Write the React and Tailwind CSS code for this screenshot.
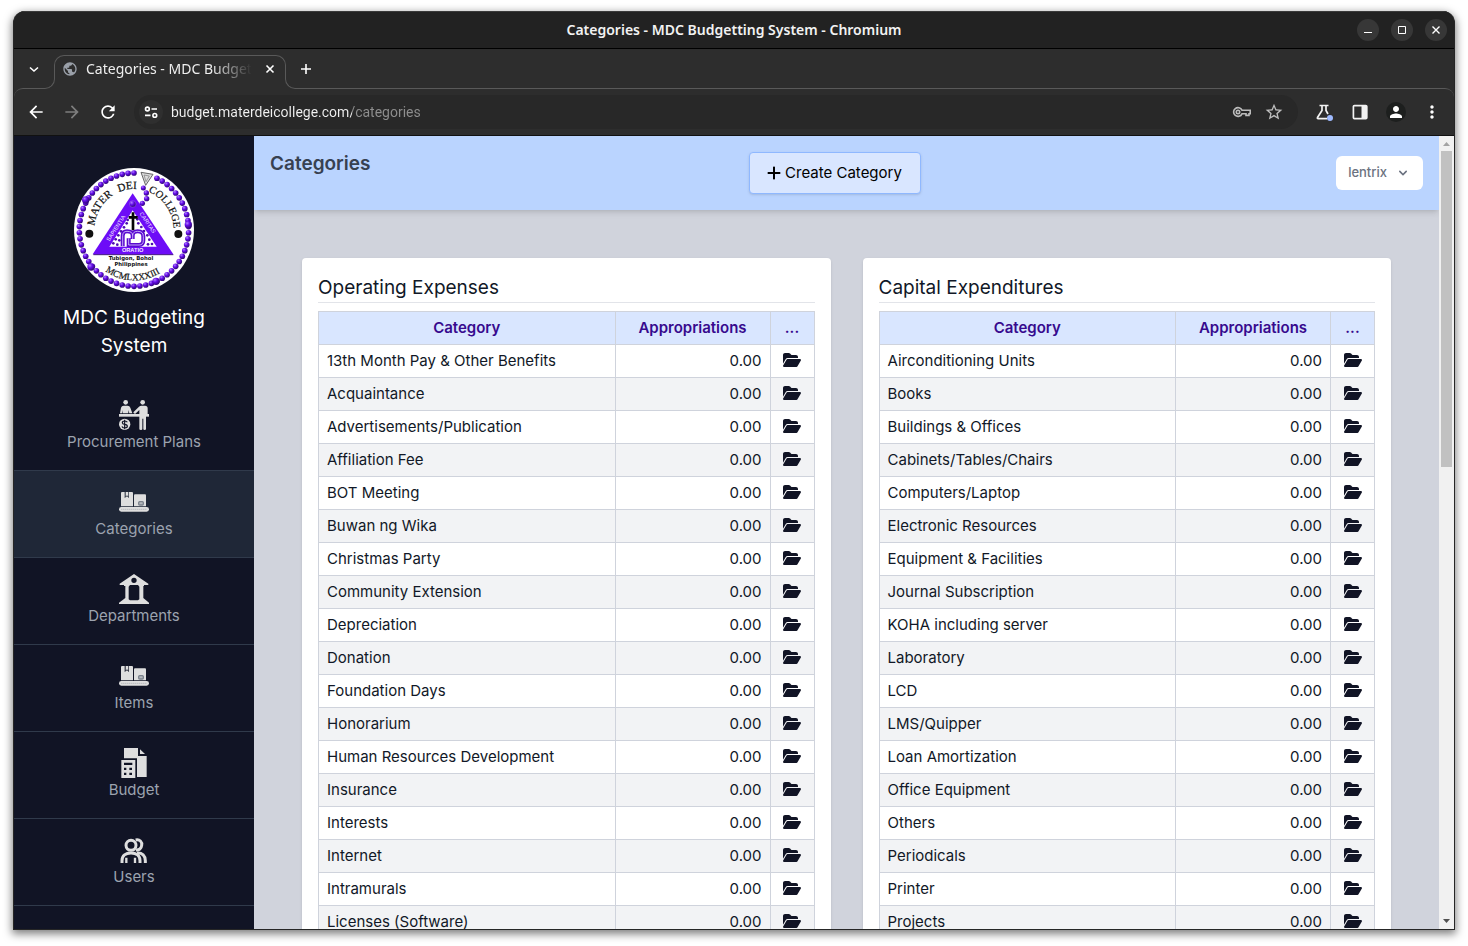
import React from "react";
import { FaFolderOpen, FaPlus } from "react-icons/fa6";
import {
  MdArrowBack,
  MdArrowForward,
  MdRefresh,
  MdStarOutline,
  MdOutlineVpnKey,
  MdPerson,
  MdMoreVert,
  MdPublic,
} from "react-icons/md";

const operating = [
  "13th Month Pay & Other Benefits",
  "Acquaintance",
  "Advertisements/Publication",
  "Affiliation Fee",
  "BOT Meeting",
  "Buwan ng Wika",
  "Christmas Party",
  "Community Extension",
  "Depreciation",
  "Donation",
  "Foundation Days",
  "Honorarium",
  "Human Resources Development",
  "Insurance",
  "Interests",
  "Internet",
  "Intramurals",
  "Licenses (Software)",
];

const capital = [
  "Airconditioning Units",
  "Books",
  "Buildings & Offices",
  "Cabinets/Tables/Chairs",
  "Computers/Laptop",
  "Electronic Resources",
  "Equipment & Facilities",
  "Journal Subscription",
  "KOHA including server",
  "Laboratory",
  "LCD",
  "LMS/Quipper",
  "Loan Amortization",
  "Office Equipment",
  "Others",
  "Periodicals",
  "Printer",
  "Projects",
];

/* ---------- Sidebar icons ---------- */

function ProcurementIcon() {
  return (
    <svg viewBox="0 0 90 90" className="size-[30px]" fill="#dedede" aria-hidden="true">
      <circle cx="20" cy="7" r="7" />
      <path d="M3 40 L6 23 Q8 17 14 17 H26 Q32 17 34 23 L40 40 H31 L28 30 V40 H12 V30 L10 40 Z" />
      <rect x="0" y="42" width="90" height="8" />
      <circle cx="71" cy="7" r="7" />
      <path d="M43 37 L60 20 Q63 17 67 17 H78 Q86 17 86 25 V45 H61 V30 L49 41 Q44 42 43 37 Z" />
      <path d="M61 48 H81 V87 Q81 90 77 90 Q73 90 73 87 V56 H70 V87 Q70 90 66 90 Q61 90 61 87 Z" />
      <circle cx="17" cy="73" r="17" />
      <path
        d="M25 67 Q23 63 17 63 Q10 63 10 68 Q10 72 17 73 Q25 74 25 79 Q25 84 17 84 Q10 84 9 79 M17 59 V88"
        fill="none"
        stroke="#111425"
        strokeWidth="3.5"
      />
    </svg>
  );
}

function BoxesIcon() {
  return (
    <svg viewBox="0 0 90 90" className="size-[30px]" fill="#dedede" aria-hidden="true">
      <path d="M9 15 H17 V33 L24 28 L30 33 V15 H39 Q42 15 42 18 V58 H6 V18 Q6 15 9 15 Z" />
      <path d="M20 15 H28 V29 L24 25 L20 29 Z" />
      <path d="M48 22 H78 Q81 22 81 25 V58 H45 V25 Q45 22 48 22 Z" />
      <rect x="59" y="44" width="14" height="10" rx="3" fill="#b5b8bd" stroke="#7b828c" strokeWidth="4" />
      <rect x="0" y="60" width="90" height="14" rx="7" />
      <path d="M7 67 H84" stroke="#8b9098" strokeWidth="2" strokeDasharray="3 3" />
    </svg>
  );
}

function BuildingIcon() {
  return (
    <svg viewBox="0 0 90 90" className="size-[30px]" aria-hidden="true">
      <path
        fill="#dedede"
        fillRule="evenodd"
        d="M45 0 L88 29 V33 H75 V36 H73 V72 L90 86 V90 H0 V86 L15 75 L19 72 V36 H15 V33 H2 V29 Z M33 33 L29 38 V76 L33 79 H57 L61 76 V38 L57 33 Z M45 11 A8 8 0 1 0 45 27 A8 8 0 1 0 45 11 Z"
      />
    </svg>
  );
}

function BudgetIcon() {
  return (
    <svg viewBox="0 0 90 90" className="size-[30px]" fill="#dedede" aria-hidden="true">
      <path d="M15 0 H57 V24 H83 V87 H54 V31 H15 Z" />
      <path d="M63 4 L78 18 H63 Z" />
      <path
        fillRule="evenodd"
        d="M7 36 H49 V90 H7 Z M15 44 V51 H40 V44 Z M15 59 V66 H22 V59 Z M31 59 V66 H39 V59 Z M15 74 V81 H22 V74 Z M31 74 V81 H39 V74 Z"
      />
    </svg>
  );
}

function UsersIcon() {
  return (
    <svg viewBox="0 0 90 90" className="size-[30px]" fill="none" stroke="#dedede" strokeWidth="9" aria-hidden="true">
      <circle cx="36" cy="31" r="15" />
      <path d="M50 15 C62 12 70 21 68 31 C67 41 60 46 51 45" />
      <path d="M9 84 V77 C9 62 20 54 36 54 C52 54 63 62 63 77 V84" />
      <path d="M54 54 C70 53 79 62 79 77 V84" />
      <path d="M22 68 V84 M48 68 V84" strokeWidth="7" />
    </svg>
  );
}

const navItems = [
  { label: "Procurement Plans", Icon: ProcurementIcon },
  { label: "Categories", Icon: BoxesIcon, active: true },
  { label: "Departments", Icon: BuildingIcon },
  { label: "Items", Icon: BoxesIcon },
  { label: "Budget", Icon: BudgetIcon },
  { label: "Users", Icon: UsersIcon },
];

/* ---------- School seal ---------- */

const COUNT = 58;
const ringBeads = Array.from({ length: COUNT }, (_, i) => {
  const a = (i / COUNT) * Math.PI * 2 - Math.PI / 2;
  return { x: 222 + 164 * Math.cos(a), y: 224 + 170 * Math.sin(a), r: 8.5 };
}).filter((b) => !(b.y < 75 && b.x > 236 && b.x < 282));

const extraBeads = [
  { x: 77, y: 135, r: 11 },
  { x: 385, y: 209, r: 11 },
  { x: 93, y: 336, r: 11 },
  { x: 288, y: 379, r: 11 },
  { x: 250, y: 99, r: 7.5 },
  { x: 259, y: 114, r: 8 },
  { x: 260, y: 131, r: 8 },
  { x: 247, y: 145, r: 8 },
];

const dots = [
  [200, 205], [235, 205], [192, 217], [244, 216], [203, 195], [232, 193],
  [183, 229], [252, 228], [175, 241], [262, 241], [167, 253], [178, 256],
  [268, 254], [160, 265], [172, 269], [276, 267], [264, 268],
];

const monogram =
  "M188 274 V242 Q188 229 201 229 Q218 229 218 242 V252 M218 242 Q218 229 233 229 Q250 229 250 244 V256 Q250 270 237 270 H206 V250";

function Seal() {
  return (
    <svg viewBox="42 39 360 372" className="h-[124px] w-[120px]" role="img" aria-label="Mater Dei College">
      <defs>
        <radialGradient id="bead" cx="0.35" cy="0.3" r="0.8">
          <stop offset="0" stopColor="#b07dff" />
          <stop offset="0.4" stopColor="#640ce8" />
          <stop offset="1" stopColor="#25045f" />
        </radialGradient>
        <path id="arc-top" d="M103 225 A119 123 0 0 1 341 225" />
        <path id="arc-bottom" d="M72 225 A150 151 0 0 0 372 225" />
        <path id="edge-left" d="M148 260 L207 170" />
        <path id="edge-right" d="M238 176 L298 266" />
      </defs>
      <ellipse cx="222" cy="225" rx="180" ry="186" fill="#fff" />
      {ringBeads.concat(extraBeads).map((b, i) => (
        <circle key={i} cx={b.x} cy={b.y} r={b.r} fill="url(#bead)" />
      ))}
      <path d="M243 52 L279 58 L257 91 Z" fill="#ddd" stroke="#666" strokeWidth="3" />
      <path d="M252 60 L268 63 L258 80 Z" fill="none" stroke="#777" strokeWidth="2" />
      <g fill="#111" stroke="#111" strokeWidth="0.6" fontFamily="'Liberation Serif', serif" fontSize="33">
        <text>
          <textPath href="#arc-top" startOffset="12">MATER</textPath>
        </text>
        <text>
          <textPath href="#arc-top" startOffset="143">DEI</textPath>
        </text>
        <text fontSize="31">
          <textPath href="#arc-top" startOffset="234">COLLEGE</textPath>
        </text>
        <text fontSize="28" textAnchor="middle">
          <textPath href="#arc-bottom" startOffset="49%">MCMLXXXIII</textPath>
        </text>
      </g>
      <circle cx="88" cy="236" r="12" fill="#111" />
      <circle cx="355" cy="237" r="12" fill="#111" />
      <path d="M218 115 L340 298 H98 Z" fill="#6d0cf7" />
      <path d="M100 299 H340" stroke="#3a067f" strokeWidth="3" />
      <path d="M218 166 L290 275 H148 Z" fill="#fff" />
      <circle cx="218" cy="147" r="10" fill="url(#bead)" stroke="#b98bff" strokeWidth="1" />
      {dots.map(([x, y]) => (
        <circle key={`${x}-${y}`} cx={x} cy={y} r="4" fill="#4c0bb0" />
      ))}
      <path d="M219 172 V226 M206 187 H233" stroke="#050505" strokeWidth="8" />
      <path d={monogram} fill="none" stroke="#5a0ad0" strokeWidth="12" />
      <path d={monogram} fill="none" stroke="#d9c4ff" strokeWidth="2.5" />
      <g fill="#f3eaff" fontFamily="'Liberation Sans', sans-serif" fontSize="17">
        <text>
          <textPath href="#edge-left">SAPIENTIA</textPath>
        </text>
        <text>
          <textPath href="#edge-right">CARITAS</textPath>
        </text>
        <text x="218" y="292" fontSize="17" fontWeight="700" textAnchor="middle">ORATIO</text>
      </g>
      <g fill="#111" fontFamily="'DejaVu Sans', sans-serif" fontSize="16" fontWeight="700" textAnchor="middle">
        <text x="213" y="315">Tubigon, Bohol</text>
        <text x="213" y="333">Philippines</text>
      </g>
    </svg>
  );
}

/* ---------- Browser chrome ---------- */

function TitleBar() {
  const btn = "flex size-[22px] items-center justify-center rounded-full bg-[#373737]";
  return (
    <div className="grid h-[38px] shrink-0 grid-cols-[1fr_auto_1fr] items-center border-t border-b border-t-[#3a3a3a] border-b-black bg-[#222222] px-[7px]">
      <span />
      <span className="font-['Noto_Sans',sans-serif] text-sm font-semibold text-[#f2f2f2]">
        Categories - MDC Budgetting System - Chromium
      </span>
      <div className="flex justify-end gap-3 text-white">
        <button type="button" aria-label="Minimize" className={btn}>
          <svg viewBox="0 0 22 22" className="size-[22px]" stroke="currentColor"><path d="M7 13.5 H15" /></svg>
        </button>
        <button type="button" aria-label="Maximize" className={btn}>
          <svg viewBox="0 0 22 22" className="size-[22px]" stroke="currentColor" fill="none"><path d="M7.5 7.5 H14.5 V14.5 H7.5 Z" /></svg>
        </button>
        <button type="button" aria-label="Close" className={btn}>
          <svg viewBox="0 0 22 22" className="size-[22px]" stroke="currentColor" strokeWidth="1.4"><path d="M7.5 7.5 L14.5 14.5 M14.5 7.5 L7.5 14.5" /></svg>
        </button>
      </div>
    </div>
  );
}

function TabStrip() {
  return (
    <div className="flex h-[39px] shrink-0 items-end">
      <button type="button" aria-label="Search tabs" className="flex h-[39px] w-[30px] items-center justify-end pr-1 text-white">
        <svg viewBox="0 0 12 12" className="size-3" fill="none" stroke="currentColor" strokeWidth="1.6"><path d="M2 4.5 L6 8 L10 4.5" /></svg>
      </button>
      <div className="relative z-10 -mb-px flex h-[34px] items-end bg-[#2d2d2d]">
        <span className="-mr-px size-[11px] rounded-br-[10px] border-r border-b border-[#595959]" />
        <div className="h-6 w-[232px] self-start rounded-t-[10px] border-x border-t border-[#595959] pr-[7px] pl-[7px]">
          <div className="flex h-[26px] items-center">
            <MdPublic className="mr-2 size-4 shrink-0 text-[#9aa0a9]" />
            <span className="w-[166px] overflow-hidden whitespace-nowrap font-['Noto_Sans',sans-serif] text-sm text-[#eeeeee] [mask-image:linear-gradient(to_right,black_75%,transparent)]">
              Categories - MDC Budgetting System
            </span>
            <button type="button" aria-label="Close tab" className="ml-auto flex w-4 justify-center text-white">
              <svg viewBox="0 0 12 12" className="size-3" stroke="currentColor" strokeWidth="1.6"><path d="M2.5 2.5 L9.5 9.5 M9.5 2.5 L2.5 9.5" /></svg>
            </button>
          </div>
        </div>
        <span className="-ml-px size-[11px] rounded-bl-[10px] border-b border-l border-[#595959]" />
      </div>
      <button type="button" aria-label="New tab" className="flex h-[39px] w-5 items-center justify-center text-white">
        <svg viewBox="0 0 12 12" className="size-3" stroke="currentColor" strokeWidth="1.6"><path d="M6 1 V11 M1 6 H11" /></svg>
      </button>
    </div>
  );
}

function Toolbar() {
  return (
    <div className="flex h-[48px] shrink-0 items-center rounded-t-[9px] border-t border-b border-t-[#595959] border-b-[#111111] px-3 text-white">
      <div className="mr-4 flex items-center gap-4">
        <button type="button" aria-label="Back"><MdArrowBack className="size-5" /></button>
        <button type="button" aria-label="Forward" className="text-[#7d7d7d]"><MdArrowForward className="size-5" /></button>
        <button type="button" aria-label="Reload"><MdRefresh className="size-5" /></button>
      </div>
      <div className="mr-4 flex h-[34px] flex-1 items-center rounded-full bg-[#282828] pr-[14px] pl-[5px]">
        <button type="button" aria-label="Site information" className="flex size-6 items-center justify-center rounded-full bg-[#2f2f2f]">
          <svg viewBox="0 0 14 14" className="size-[14px]" fill="none" stroke="currentColor" strokeWidth="1.6">
            <circle cx="3.4" cy="4" r="1.9" />
            <path d="M7.5 4 H13 M1 10.4 H6.5" />
            <circle cx="10.8" cy="10.4" r="1.9" />
          </svg>
        </button>
        <input
          aria-label="Address"
          type="text"
          defaultValue="budget.materdeicollege.com/categories"
          className="ml-2 min-w-0 flex-1 bg-[linear-gradient(to_right,#f2f2f2_181px,#8f8f8f_181px)] bg-clip-text font-[Roboto,sans-serif] text-sm text-transparent outline-none"
        />
        <button type="button" aria-label="Passwords" className="mr-3 text-[#bdbdbd]">
          <svg viewBox="0 0 20 20" className="size-5" fill="none" stroke="currentColor" strokeWidth="1.6">
            <path d="M10 8.2 H18.2 V11.8 H17 V13.4 H14 V11.8 H10 A4.4 4.4 0 1 1 10 8.2 Z" />
            <circle cx="6" cy="10" r="1.7" />
          </svg>
        </button>
        <button type="button" aria-label="Bookmark" className="text-[#bdbdbd]"><MdStarOutline className="size-5" /></button>
      </div>
      <div className="flex items-center gap-4">
        <button type="button" aria-label="Experiments">
          <svg viewBox="0 0 20 20" className="size-5" fill="none" stroke="#f2f2f2" strokeWidth="1.7">
            <path d="M5.5 3.5 H14.5 M8 3.5 V8.5 L3.5 15.5 Q3 16.7 4.2 16.7 H13 M12 3.5 V8.5 L14 12" />
            <circle cx="16" cy="16" r="3" fill="#9fbaff" stroke="none" />
          </svg>
        </button>
        <button type="button" aria-label="Side panel">
          <svg viewBox="0 0 20 20" className="size-5" fill="none" stroke="#f2f2f2" strokeWidth="1.7">
            <rect x="3.4" y="3.6" width="13.4" height="13" rx="1" />
            <rect x="11.5" y="4" width="5" height="12.4" fill="#f2f2f2" stroke="none" />
          </svg>
        </button>
        <button type="button" aria-label="Profile" className="flex size-5 items-center justify-center rounded-full bg-[#1d1f1e]">
          <MdPerson className="size-[18px]" />
        </button>
        <button type="button" aria-label="Menu"><MdMoreVert className="size-5" /></button>
      </div>
    </div>
  );
}

function Scrollbar() {
  return (
    <div className="flex w-[15px] shrink-0 flex-col items-center bg-[#f1f1f1]" aria-hidden="true">
      <svg viewBox="0 0 15 15" className="size-[15px]"><path d="M4 10 L7.5 6 L11 10 Z" fill="#a3a3a3" /></svg>
      <div className="min-h-0 w-[11px] flex-1">
        <div className="h-[316px] bg-[#c1c1c1]" />
      </div>
      <svg viewBox="0 0 15 15" className="size-[15px]"><path d="M4 5 L7.5 9 L11 5 Z" fill="#505050" /></svg>
    </div>
  );
}

/* ---------- Page ---------- */

function Sidebar() {
  return (
    <aside className="w-60 shrink-0 overflow-hidden bg-[#111425] pt-8">
      <div className="flex flex-col items-center px-8 pb-6 text-center">
        <Seal />
        <p className="mt-3 text-[19px] leading-7 text-white">
          MDC Budgeting
          <br />
          System
        </p>
      </div>
      <nav>
        {navItems.map(({ label, Icon, active }) => (
          <a
            key={label}
            href="#"
            className={`flex flex-col items-center border-b border-[#303a4b] py-4 text-[15px] leading-6 text-[#9ca3af] ${
              active ? "bg-[#1f2737]" : ""
            }`}
          >
            <Icon />
            {label}
          </a>
        ))}
      </nav>
    </aside>
  );
}

function CategoryCard({ title, rows }) {
  return (
    <section className="rounded bg-white p-4 shadow-sm">
      <h2 className="mb-2 border-b border-[#e2e4e9] text-[19px] leading-7 text-[#111827]">{title}</h2>
      <table className="w-full table-fixed border-collapse text-[15px] leading-6 text-[#111827]">
        <colgroup>
          <col />
          <col className="w-[155px]" />
          <col className="w-11" />
        </colgroup>
        <thead>
          <tr className="bg-[#d9e6ff] text-[#370a8e]">
            <th className="border border-[#cfd3dc] px-2 py-1 font-semibold">Category</th>
            <th className="border border-[#cfd3dc] px-2 py-1 font-semibold">Appropriations</th>
            <th className="border border-[#cfd3dc] px-2 py-1 font-semibold">...</th>
          </tr>
        </thead>
        <tbody>
          {rows.map((name) => (
            <tr key={name} className="even:bg-[#f2f3f5]">
              <td className="border border-[#cfd3dc] px-2 py-1">{name}</td>
              <td className="border border-[#cfd3dc] px-2 py-1 text-right">0.00</td>
              <td className="border border-[#cfd3dc] py-1">
                <a href="#" aria-label={`Open ${name}`} className="flex h-6 justify-center pt-[3px] text-[#111425]">
                  <FaFolderOpen className="h-4 w-[18px]" />
                </a>
              </td>
            </tr>
          ))}
        </tbody>
      </table>
    </section>
  );
}

function Page() {
  return (
    <div className="flex min-h-0 flex-1 font-['Inter',sans-serif]">
      <Sidebar />
      <main className="flex min-w-0 flex-1 flex-col overflow-hidden bg-[#d0d3dc]">
        <header className="z-10 grid shrink-0 grid-cols-[1fr_auto_1fr] bg-[#bad4ff] p-4 shadow-md">
          <h1 className="text-[19px] leading-6 font-semibold text-[#374151]">Categories</h1>
          <button
            type="button"
            className="mr-6 flex h-[42px] min-w-[172px] items-center justify-center gap-1 rounded border border-[#8fb8ff] bg-[#d9e6ff] px-4 text-[15px] text-black shadow-sm"
          >
            <FaPlus className="h-4 w-[14px]" />
            Create Category
          </button>
          <button
            type="button"
            className="flex h-[34px] items-center gap-2 self-center justify-self-end rounded-md bg-white px-3 text-[13px] font-medium text-[#6b7280]"
          >
            lentrix
            <svg viewBox="0 0 20 20" className="size-4" fill="currentColor">
              <path
                fillRule="evenodd"
                d="M5.293 7.293a1 1 0 011.414 0L10 10.586l3.293-3.293a1 1 0 111.414 1.414l-4 4a1 1 0 01-1.414 0l-4-4a1 1 0 010-1.414z"
              />
            </svg>
          </button>
        </header>
        <div className="grid min-h-0 flex-1 grid-cols-2 items-start gap-8 overflow-hidden p-12">
          <CategoryCard title="Operating Expenses" rows={operating} />
          <CategoryCard title="Capital Expenditures" rows={capital} />
        </div>
      </main>
      <Scrollbar />
    </div>
  );
}

export default function App() {
  return (
    <div className="flex h-screen flex-col bg-white px-[13px] pt-[11px] pb-4">
      <div className="flex min-h-0 flex-1 flex-col overflow-hidden rounded-t-xl border-x border-b border-[#262626] bg-[#2d2d2d] shadow-[0_3px_9px_1px_rgba(0,0,0,0.5)]">
        <TitleBar />
        <TabStrip />
        <Toolbar />
        <Page />
      </div>
    </div>
  );
}
